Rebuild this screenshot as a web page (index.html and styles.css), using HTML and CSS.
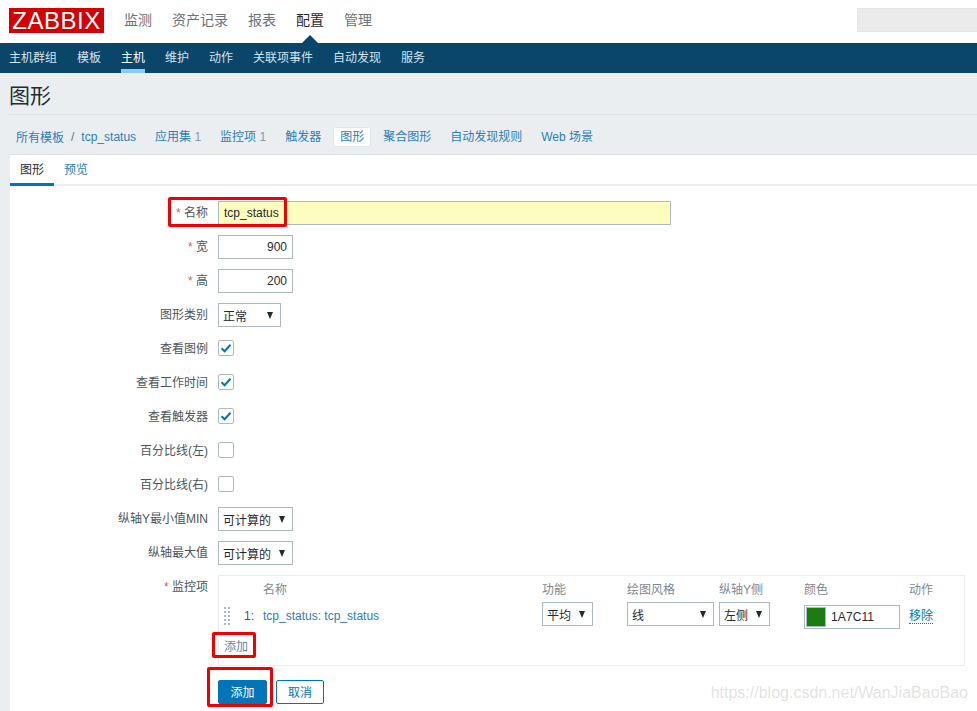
FILE: index.html
```html
<!DOCTYPE html>
<html lang="zh">
<head>
<meta charset="utf-8">
<title>图形</title>
<link rel="stylesheet" href="styles.css">
</head>
<body>
<header class="top">
  <div class="logo">ZABBIX</div>
  <nav class="mainnav">
    <a>监测</a><a>资产记录</a><a>报表</a><a class="on">配置</a><a>管理</a>
  </nav>
  <div class="search"></div>
</header>
<nav class="subnav">
  <a>主机群组</a><a>模板</a><a class="on">主机</a><a>维护</a><a>动作</a><a>关联项事件</a><a>自动发现</a><a>服务</a>
</nav>
<main class="page">
  <h1 class="title">图形</h1>
  <nav class="crumbs">
    <a class="crumb">所有模板</a><span class="sep">/</span><a class="crumb last">tcp_status</a>
    <a class="link">应用集 <i>1</i></a>
    <a class="link">监控项 <i>1</i></a>
    <a class="link">触发器</a>
    <a class="link cur">图形</a>
    <a class="link">聚合图形</a>
    <a class="link">自动发现规则</a>
    <a class="link">Web 场景</a>
  </nav>
  <section class="panel">
    <div class="tabs"><a class="tab on">图形</a><a class="tab">预览</a></div>
    <form class="form">
      <div class="row"><label class="lab"><b>*</b> 名称</label><div class="input name">tcp_status</div></div>
      <div class="row"><label class="lab"><b>*</b> 宽</label><div class="input num">900</div></div>
      <div class="row"><label class="lab"><b>*</b> 高</label><div class="input num">200</div></div>
      <div class="row"><label class="lab">图形类别</label><div class="select w63">正常<s></s></div></div>
      <div class="row"><label class="lab">查看图例</label><span class="check"><svg width="12" height="10" viewBox="0 0 12 10"><path d="M1.5 5.2 4.6 8.2 10.5 1.8" fill="none" stroke="#0275b8" stroke-width="2"/></svg></span></div>
      <div class="row"><label class="lab">查看工作时间</label><span class="check"><svg width="12" height="10" viewBox="0 0 12 10"><path d="M1.5 5.2 4.6 8.2 10.5 1.8" fill="none" stroke="#0275b8" stroke-width="2"/></svg></span></div>
      <div class="row"><label class="lab">查看触发器</label><span class="check"><svg width="12" height="10" viewBox="0 0 12 10"><path d="M1.5 5.2 4.6 8.2 10.5 1.8" fill="none" stroke="#0275b8" stroke-width="2"/></svg></span></div>
      <div class="row"><label class="lab">百分比线(左)</label><span class="check"></span></div>
      <div class="row"><label class="lab">百分比线(右)</label><span class="check"></span></div>
      <div class="row"><label class="lab">纵轴Y最小值MIN</label><div class="select w75">可计算的<s></s></div></div>
      <div class="row"><label class="lab">纵轴最大值</label><div class="select w75">可计算的<s></s></div></div>
      <div class="row items">
        <label class="lab"><b>*</b> 监控项</label>
        <div class="itembox">
          <div class="grid head">
            <span></span><span></span><span>名称</span><span>功能</span><span>绘图风格</span><span>纵轴Y侧</span><span>颜色</span><span>动作</span>
          </div>
          <div class="grid item">
            <span class="drag"></span><span class="idx">1:</span><a class="itemlink">tcp_status: tcp_status</a>
            <div class="select w51">平均<s></s></div>
            <div class="select w87">线<s></s></div>
            <div class="select w51">左侧<s></s></div>
            <div class="color"><span class="swatch"></span>1A7C11</div>
            <a class="remove">移除</a>
          </div>
          <a class="addlink">添加</a>
        </div>
      </div>
      <div class="row buttons"><span class="spacer"></span><a class="btn primary">添加</a><a class="btn">取消</a></div>
    </form>
  </section>
</main>
<div class="mark m1"></div>
<div class="mark m2"></div>
<div class="mark m3"></div>
<div class="water">https://blog.csdn.net/WanJiaBaoBao</div>
</body>
</html>
```

FILE: styles.css
```css
* { box-sizing: border-box; }
html, body { margin: 0; height: 711px; overflow: hidden; }
body {
  position: relative;
  background: #fff;
  font-family: "Liberation Sans", "Noto Sans CJK SC", sans-serif;
  font-size: 12px;
  color: #1f2c33;
}
a { text-decoration: none; cursor: pointer; }

.top { height: 43px; display: flex; align-items: flex-start; padding-left: 9px; background: #fff; position: relative; }
.logo {
  width: 95px; height: 25px; margin-top: 8px;
  background: #d40000; color: #fff;
  font-size: 24px; line-height: 25px; text-align: center; letter-spacing: .5px;
}
.mainnav { display: flex; gap: 20px; margin-left: 20px; margin-top: 12px; font-size: 14px; line-height: 16px; }
.mainnav a { color: #68747c; }
.mainnav a.on { color: #1f2c33; position: relative; }
.mainnav a.on::after {
  content: ""; position: absolute; left: 6px; top: 23px;
  border-left: 8px solid transparent; border-right: 8px solid transparent;
  border-bottom: 8px solid #0a466a;
}
.search { width: 120px; height: 24px; margin: 8px 0 0 auto; background: #ebebeb; border: 1px solid #e5e5e5; border-right: 0; }

.subnav { height: 30px; background: #0a466a; display: flex; gap: 20px; padding-left: 9px; line-height: 30px; }
.subnav a { color: #d6e3ea; height: 30px; }
.subnav a.on { color: #fff; box-shadow: inset 0 -4px 0 #8ccbf5; }

.page { background: #ebeef0; height: 638px; display: flex; flex-direction: column; }
.title { margin: 0; padding: 10px 0 0 9px; height: 41px; font-size: 21px; line-height: 25px; font-weight: 400; color: #1f2c33; }
.crumbs {
  margin-left: 9px; height: 40px; border-top: 1px solid #dfe4e7;
  display: flex; align-items: center; padding: 4px 0 0 7px; color: #1a7cbd;
}
.crumbs a { color: #2a7ebb; }
.crumbs i { font-style: normal; color: #8a9aa5; }
.sep { margin: 0 7px; color: #68747c; }
.last { margin-right: 12px; }
.link { padding: 3px 7px; margin-right: 5px; line-height: 14px; border-radius: 2px; }
.link.cur { background: #fff; color: #2a7ebb; box-shadow: inset 0 0 0 1px #e3e7ea; }

.panel { margin-left: 10px; flex: 1; background: #fff; border-top: 1px solid #dfe4e7; }
.tabs { height: 31px; display: flex; border-bottom: 2px solid #ebeef0; }
.tab { width: 44px; height: 31px; text-align: center; line-height: 31px; color: #2a7ebb; }
.tab.on { color: #1f2c33; border-bottom: 3px solid #0275b8; }

.form { padding-top: 15px; display: flex; flex-direction: column; gap: 10px; }
.row { display: flex; align-items: center; height: 24px; gap: 10px; }
.lab { width: 198px; text-align: right; color: #4a565e; flex: none; line-height: 14px; }
.lab b { color: #e05a5a; font-weight: 400; }
.input { height: 24px; border: 1px solid #acbbc2; line-height: 22px; padding: 0 5px; background: #fff; }
.name { width: 453px; background: #fdfebd; }
.num { width: 75px; text-align: right; }
.select { height: 24px; border: 1px solid #acbbc2; line-height: 26px; padding-left: 4px; position: relative; background: #fff; flex: none; }
.select s {
  position: absolute; right: 7px; top: 8px;
  border-left: 3.5px solid transparent; border-right: 3.5px solid transparent;
  border-top: 7px solid #1f2c33;
}
.w63 { width: 63px; } .w75 { width: 75px; } .w51 { width: 51px; } .w87 { width: 87px; }
.check { width: 16px; height: 16px; border: 1px solid #acbbc2; border-radius: 2px; display: flex; align-items: center; justify-content: center; align-self: flex-start; margin-top: 3px; }

.row.items { align-items: flex-start; height: 91px; }
.row.items .lab { padding-top: 5px; }
.itembox { width: 747px; height: 91px; border: 1px solid #ebeef0; padding: 7px 0 0 5px; }
.grid { display: grid; grid-template-columns: 20px 19px 279px 85px 92px 85px 105px 40px; align-items: center; }
.head { height: 14px; line-height: 14px; color: #7c8a93; }
.item { margin-top: 6px; height: 26px; }
.item .select { align-self: start; margin-top: -1px; line-height: 27px; }
.drag {
  width: 6px; height: 18px;
  background-image: conic-gradient(#acbbc2 25%, transparent 0);
  background-size: 4px 4px;
  background-position: -2px 0;
}
.idx { color: #4a565e; text-align: left; }
.itemlink { color: #2a7ebb; }
.color { width: 96px; height: 24px; margin-top: 2px; border: 1px solid #acbbc2; display: flex; align-items: center; gap: 5px; padding-left: 1px; letter-spacing: .1px; }
.swatch { width: 20px; height: 20px; background: #1a7c11; border: 1px solid #acbbc2; }
.remove { color: #0275b8; border-bottom: 1px dotted #0275b8; justify-self: start; line-height: 14px; }
.addlink { display: block; margin-top: 11px; color: #5b8bb5; line-height: 14px; }

.buttons { margin-top: 4px; }
.spacer { width: 198px; flex: none; }
.btn { height: 24px; width: 48px; border: 1px solid #0275b8; border-radius: 2px; text-align: center; line-height: 24px; color: #0275b8; background: #fff; margin-left: -1px; }
.btn.primary { width: 49px; background: #0275b8; color: #fff; margin-left: 0; }

.mark { position: absolute; border: 3px solid #f00000; border-radius: 2px; }
.m1 { left: 168px; top: 197px; width: 119px; height: 30px; }
.m2 { left: 212px; top: 632px; width: 44px; height: 26px; }
.m3 { left: 207px; top: 667px; width: 66px; height: 40px; }
.water { position: absolute; right: 9px; top: 685px; font-size: 16px; color: rgba(120,120,120,.22); line-height: 16px; }
```
